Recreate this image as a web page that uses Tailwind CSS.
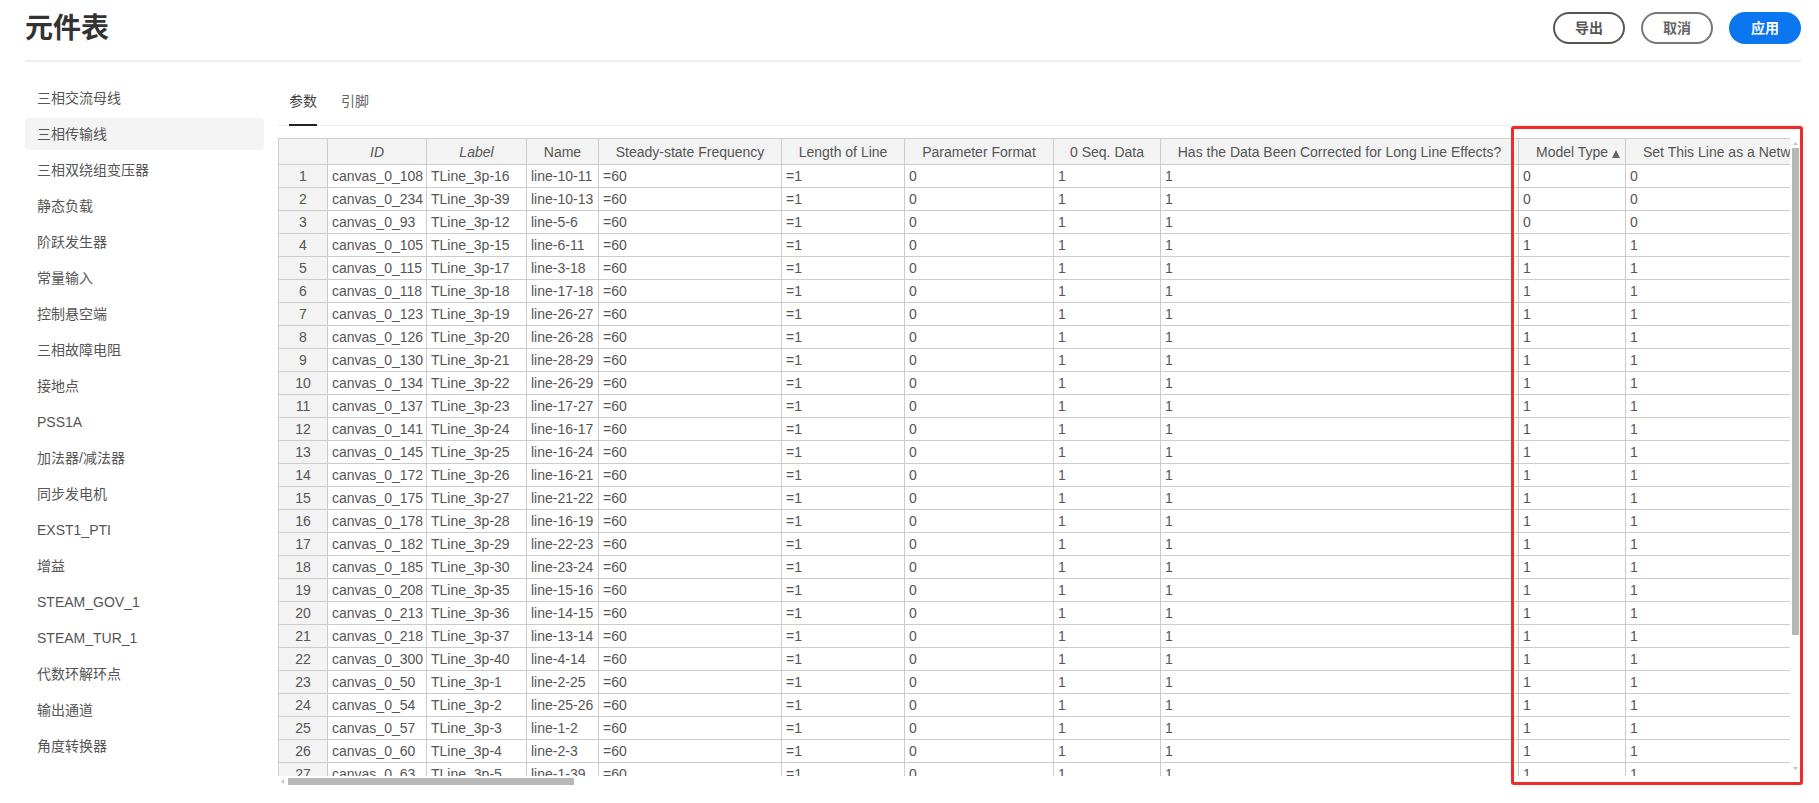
<!DOCTYPE html>
<html lang="zh">
<head>
<meta charset="utf-8">
<title>元件表</title>
<script src="https://cdn.jsdelivr.net/npm/@tailwindcss/browser@4"></script>
</head>
<body class="bg-white overflow-hidden font-['Liberation_Sans','Noto_Sans_CJK_SC',sans-serif] text-[#555]">
<div class="relative w-[1819px] h-[803px] overflow-hidden">
  <header class="ml-[25px] w-[1776px] h-[62px] pt-3 border-b-2 border-[#eee] flex justify-between items-start">
    <h1 class="text-[28px] leading-[34px] font-bold text-[#333]">元件表</h1>
    <div class="flex gap-4">
      <button class="w-[72px] h-8 rounded-full border-2 border-[#555] text-[14px] font-bold text-[#555]">导出</button>
      <button class="w-[72px] h-8 rounded-full border-2 border-[#777] text-[14px] font-bold text-[#666]">取消</button>
      <button class="w-[72px] h-8 rounded-full bg-[#0b76f0] text-[14px] font-bold text-white">应用</button>
    </div>
  </header>
  <div class="flex">
    <nav class="ml-[25px] mt-[18px] w-[239px] text-[14px] [&>a]:block [&>a]:h-9 [&>a]:leading-9 [&>a]:pl-3">
      <a>三相交流母线</a>
      <a class="bg-[#f4f4f4] rounded !h-8 !leading-8 my-0.5">三相传输线</a>
      <a>三相双绕组变压器</a>
      <a>静态负载</a>
      <a>阶跃发生器</a>
      <a>常量输入</a>
      <a>控制悬空端</a>
      <a>三相故障电阻</a>
      <a>接地点</a>
      <a>PSS1A</a>
      <a>加法器/减法器</a>
      <a>同步发电机</a>
      <a>EXST1_PTI</a>
      <a>增益</a>
      <a>STEAM_GOV_1</a>
      <a>STEAM_TUR_1</a>
      <a>代数环解环点</a>
      <a>输出通道</a>
      <a>角度转换器</a>
    </nav>
    <main class="ml-[14px] w-[1523px]">
      <div class="w-[1512px] h-[63px] pl-[11px] border-b border-[#eee] box-content flex gap-6 text-[14px] leading-5">
        <div class="w-7 h-[64px] pt-[29px] border-b-2 border-[#222] text-[#444]">参数</div>
        <div class="h-[64px] pt-[29px] text-[#666]">引脚</div>
      </div>
      <div class="flex mt-3">
        <div class="w-[1512px] h-[638px] overflow-hidden">
          <table class="table-fixed border-separate border-spacing-0 w-[1764px] text-[14px] leading-[22px] text-[#555] [&_th]:border-r [&_th]:border-b [&_th]:border-[#ccc] [&_th]:bg-[#f3f3f3] [&_th]:font-normal [&_th]:overflow-hidden [&_th]:whitespace-nowrap [&_td]:border-r [&_td]:border-b [&_td]:border-[#ccc] [&_td]:px-1 [&_td]:whitespace-nowrap [&_td]:overflow-hidden [&_thead_th]:h-[27px] [&_thead_th]:border-t [&_tbody_th]:h-[23px] [&_tr>*:first-child]:border-l">
            <colgroup>
              <col class="w-[50px]"><col class="w-[99px]"><col class="w-[100px]"><col class="w-[72px]"><col class="w-[183px]"><col class="w-[123px]"><col class="w-[149px]"><col class="w-[107px]"><col class="w-[358px]"><col class="w-[107px]"><col class="w-[416px]">
            </colgroup>
            <thead>
              <tr><th></th><th class="italic">ID</th><th class="italic">Label</th><th>Name</th><th>Steady-state Frequency</th><th>Length of Line</th><th>Parameter Format</th><th>0 Seq. Data</th><th>Has the Data Been Corrected for Long Line Effects?</th><th class="!text-left !pl-[17px]">Model Type<svg class="inline-block ml-1 w-2 h-[8px] align-[-1px]" viewBox="0 0 8 8"><polygon points="4,0 8,8 0,8" fill="#666"/></svg></th><th class="!text-left !pl-[17px]">Set This Line as a Network Branch</th></tr>
            </thead>
            <tbody>
              <tr><th>1</th><td>canvas_0_108</td><td>TLine_3p-16</td><td>line-10-11</td><td>=60</td><td>=1</td><td>0</td><td>1</td><td>1</td><td>0</td><td>0</td></tr>
              <tr><th>2</th><td>canvas_0_234</td><td>TLine_3p-39</td><td>line-10-13</td><td>=60</td><td>=1</td><td>0</td><td>1</td><td>1</td><td>0</td><td>0</td></tr>
              <tr><th>3</th><td>canvas_0_93</td><td>TLine_3p-12</td><td>line-5-6</td><td>=60</td><td>=1</td><td>0</td><td>1</td><td>1</td><td>0</td><td>0</td></tr>
              <tr><th>4</th><td>canvas_0_105</td><td>TLine_3p-15</td><td>line-6-11</td><td>=60</td><td>=1</td><td>0</td><td>1</td><td>1</td><td>1</td><td>1</td></tr>
              <tr><th>5</th><td>canvas_0_115</td><td>TLine_3p-17</td><td>line-3-18</td><td>=60</td><td>=1</td><td>0</td><td>1</td><td>1</td><td>1</td><td>1</td></tr>
              <tr><th>6</th><td>canvas_0_118</td><td>TLine_3p-18</td><td>line-17-18</td><td>=60</td><td>=1</td><td>0</td><td>1</td><td>1</td><td>1</td><td>1</td></tr>
              <tr><th>7</th><td>canvas_0_123</td><td>TLine_3p-19</td><td>line-26-27</td><td>=60</td><td>=1</td><td>0</td><td>1</td><td>1</td><td>1</td><td>1</td></tr>
              <tr><th>8</th><td>canvas_0_126</td><td>TLine_3p-20</td><td>line-26-28</td><td>=60</td><td>=1</td><td>0</td><td>1</td><td>1</td><td>1</td><td>1</td></tr>
              <tr><th>9</th><td>canvas_0_130</td><td>TLine_3p-21</td><td>line-28-29</td><td>=60</td><td>=1</td><td>0</td><td>1</td><td>1</td><td>1</td><td>1</td></tr>
              <tr><th>10</th><td>canvas_0_134</td><td>TLine_3p-22</td><td>line-26-29</td><td>=60</td><td>=1</td><td>0</td><td>1</td><td>1</td><td>1</td><td>1</td></tr>
              <tr><th>11</th><td>canvas_0_137</td><td>TLine_3p-23</td><td>line-17-27</td><td>=60</td><td>=1</td><td>0</td><td>1</td><td>1</td><td>1</td><td>1</td></tr>
              <tr><th>12</th><td>canvas_0_141</td><td>TLine_3p-24</td><td>line-16-17</td><td>=60</td><td>=1</td><td>0</td><td>1</td><td>1</td><td>1</td><td>1</td></tr>
              <tr><th>13</th><td>canvas_0_145</td><td>TLine_3p-25</td><td>line-16-24</td><td>=60</td><td>=1</td><td>0</td><td>1</td><td>1</td><td>1</td><td>1</td></tr>
              <tr><th>14</th><td>canvas_0_172</td><td>TLine_3p-26</td><td>line-16-21</td><td>=60</td><td>=1</td><td>0</td><td>1</td><td>1</td><td>1</td><td>1</td></tr>
              <tr><th>15</th><td>canvas_0_175</td><td>TLine_3p-27</td><td>line-21-22</td><td>=60</td><td>=1</td><td>0</td><td>1</td><td>1</td><td>1</td><td>1</td></tr>
              <tr><th>16</th><td>canvas_0_178</td><td>TLine_3p-28</td><td>line-16-19</td><td>=60</td><td>=1</td><td>0</td><td>1</td><td>1</td><td>1</td><td>1</td></tr>
              <tr><th>17</th><td>canvas_0_182</td><td>TLine_3p-29</td><td>line-22-23</td><td>=60</td><td>=1</td><td>0</td><td>1</td><td>1</td><td>1</td><td>1</td></tr>
              <tr><th>18</th><td>canvas_0_185</td><td>TLine_3p-30</td><td>line-23-24</td><td>=60</td><td>=1</td><td>0</td><td>1</td><td>1</td><td>1</td><td>1</td></tr>
              <tr><th>19</th><td>canvas_0_208</td><td>TLine_3p-35</td><td>line-15-16</td><td>=60</td><td>=1</td><td>0</td><td>1</td><td>1</td><td>1</td><td>1</td></tr>
              <tr><th>20</th><td>canvas_0_213</td><td>TLine_3p-36</td><td>line-14-15</td><td>=60</td><td>=1</td><td>0</td><td>1</td><td>1</td><td>1</td><td>1</td></tr>
              <tr><th>21</th><td>canvas_0_218</td><td>TLine_3p-37</td><td>line-13-14</td><td>=60</td><td>=1</td><td>0</td><td>1</td><td>1</td><td>1</td><td>1</td></tr>
              <tr><th>22</th><td>canvas_0_300</td><td>TLine_3p-40</td><td>line-4-14</td><td>=60</td><td>=1</td><td>0</td><td>1</td><td>1</td><td>1</td><td>1</td></tr>
              <tr><th>23</th><td>canvas_0_50</td><td>TLine_3p-1</td><td>line-2-25</td><td>=60</td><td>=1</td><td>0</td><td>1</td><td>1</td><td>1</td><td>1</td></tr>
              <tr><th>24</th><td>canvas_0_54</td><td>TLine_3p-2</td><td>line-25-26</td><td>=60</td><td>=1</td><td>0</td><td>1</td><td>1</td><td>1</td><td>1</td></tr>
              <tr><th>25</th><td>canvas_0_57</td><td>TLine_3p-3</td><td>line-1-2</td><td>=60</td><td>=1</td><td>0</td><td>1</td><td>1</td><td>1</td><td>1</td></tr>
              <tr><th>26</th><td>canvas_0_60</td><td>TLine_3p-4</td><td>line-2-3</td><td>=60</td><td>=1</td><td>0</td><td>1</td><td>1</td><td>1</td><td>1</td></tr>
              <tr><th>27</th><td>canvas_0_63</td><td>TLine_3p-5</td><td>line-1-39</td><td>=60</td><td>=1</td><td>0</td><td>1</td><td>1</td><td>1</td><td>1</td></tr>
            </tbody>
          </table>
        </div>
        <div class="ml-0.5 w-[7px] flex flex-col items-center">
          <svg class="mt-[4px] w-[5px] h-[3px]" viewBox="0 0 5 3"><polygon points="2.5,0 5,3 0,3" fill="#c4c4c4"/></svg>
          <div class="mt-[3px] w-[7px] h-[487px] bg-[#b8b8b8]"></div>
          <svg class="mt-[132px] w-[5px] h-[3px]" viewBox="0 0 5 3"><polygon points="0,0 5,0 2.5,3" fill="#c4c4c4"/></svg>
        </div>
      </div>
      <div class="flex items-center mt-0.5 h-[7px]">
        <svg class="ml-[3px] w-[3px] h-[5px]" viewBox="0 0 3 5"><polygon points="3,0 3,5 0,2.5" fill="#c4c4c4"/></svg>
        <div class="ml-1 w-[286px] h-[7px] bg-[#b8b8b8]"></div>
      </div>
    </main>
  </div>
  <div class="absolute left-[1511px] top-[126px] w-[292px] h-[659px] border-[3px] border-[#ee2a2a] rounded-[3px] pointer-events-none"></div>
</div>
</body>
</html>
